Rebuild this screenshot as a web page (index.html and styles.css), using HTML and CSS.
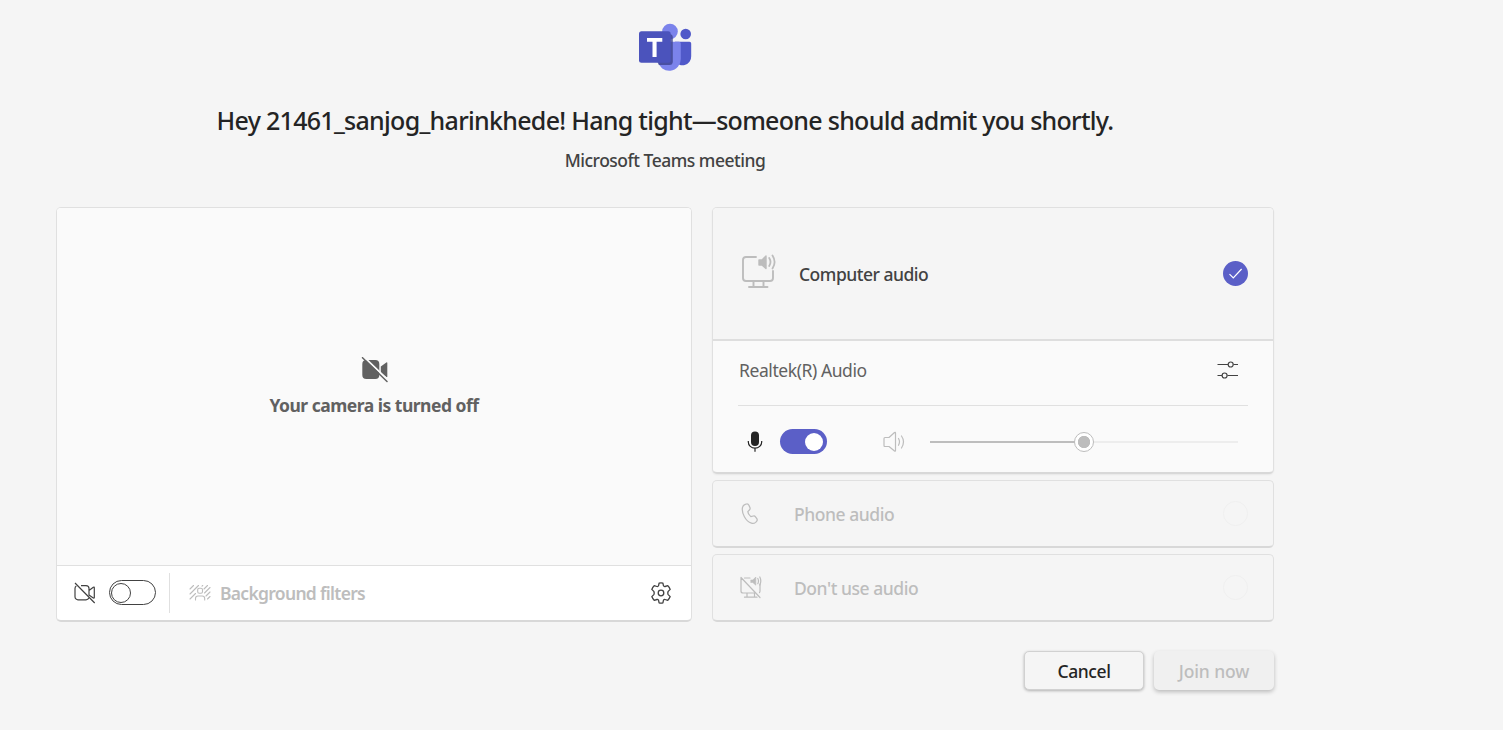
FILE: index.html
```html
<!DOCTYPE html>
<html lang="en">
<head>
<meta charset="utf-8">
<title>Microsoft Teams meeting</title>
<link rel="stylesheet" href="styles.css">
</head>
<body>
<main class="lobby">
  <header class="intro">
    <svg class="logo" width="54" height="48" viewBox="0 0 54 48">
      <circle cx="47.700" cy="11" r="5.300" fill="#5059c9"/>
      <path d="M37 18.800h14.500q1.700 0 1.700 1.800v12.700a8.500 8.500 0 0 1-16.200 4z" fill="#5059c9"/>
      <circle cx="32" cy="8.500" r="7.800" fill="#7b83eb"/>
      <path d="M20 18.800h21q1.800 0 1.800 1.800v15a11.600 11.800 0 0 1-23 2.500z" fill="#7b83eb"/>
      <path d="M20 11h11.500q3.300 0 3.300 3.500V38.500q0 3.500-3.300 3.500H20.800l-1.300-3z" fill="#3d4390" opacity=".8"/>
      <rect x="1" y="8.200" width="31.700" height="31.600" rx="2.500" fill="#4b53bc"/>
      <path d="M9 15h15.300v3.700h-5.700V34h-4.100V18.700H9z" fill="#fff"/>
    </svg>
    <h1 class="title">Hey 21461_sanjog_harinkhede! Hang tight—someone should admit you shortly.</h1>
    <p class="meeting">Microsoft Teams meeting</p>
  </header>

  <div class="panels">
    <section class="card video">
      <div class="preview">
        <svg width="27" height="26" viewBox="0 0 27 26">
          <rect x="1.300" y="3" width="17" height="19" rx="4" fill="#616161"/>
          <path d="M19.800 9.500 25.300 5.500q1-.5 1 .5v13.500q0 1-1 .5l-5.500-4z" fill="#616161"/>
          <path d="M2.500-.5 28 24" stroke="#fafafa" stroke-width="1.800"/>
          <path d="M1.500.7 26 24.500" stroke="#616161" stroke-width="1.500" stroke-linecap="round"/>
        </svg>
        <p class="off-note">Your camera is turned off</p>
      </div>
      <div class="video-bar">
        <svg class="cam" width="22" height="22" viewBox="0 0 22 22" fill="none" stroke="#424242" stroke-width="1.200">
          <path d="M7 3.600h5a3 3 0 0 1 3 3v7M15 16q-1 1.800-3 1.800H4a3 3 0 0 1-3-3V6.600q0-1.700 1.300-2.500M15 8.500l4.300-3.300q1-.5 1 .6v9.600q0 1-1 .6L15 13M1 1l19.700 20"/>
        </svg>
        <span class="switch switch-off"></span>
        <span class="bar-rule"></span>
        <svg class="bg-icon" width="22" height="18" viewBox="0 0 22 18" fill="none" stroke="#bdbdbd" stroke-width="1.100" stroke-linecap="round">
          <path d="M1 5l3.500-3.500M1 10l8.500-8.500M1 15l5.500-5.500M13 2.200l.7-.7M15 5l3.500-3.500M15.500 9l5.500-5.500M17 12l4-4M18.500 15l2.500-2.500"/>
          <rect x="8.700" y="4.300" width="4.800" height="5" rx="1.500"/>
          <path d="M6.500 16v-1.500q0-2.500 2.500-2.500h4.200q2.500 0 2.500 2.500V16"/>
        </svg>
        <span class="filters">Background filters</span>
        <svg class="gear" width="22" height="22" viewBox="0 0 22 22" fill="none" stroke="#424242" stroke-width="1.300" stroke-linejoin="round">
          <path d="M9.100 1.200Q11 .6 12.900 1.200l.6 2.600q.5 1 1.600.7l2.700-.8q1.600 1.600 2.400 3.700l-2 2q-.8 1.600 0 3.200l2 2q-.8 2.100-2.400 3.700l-2.700-.8q-1.100-.3-1.600.7l-.6 2.600q-1.900.6-3.800 0l-.6-2.600q-.5-1-1.600-.7l-2.700.8q-1.600-1.600-2.400-3.700l2-2q.8-1.600 0-3.200l-2-2q.8-2.100 2.400-3.700l2.700.8q1.100.3 1.600-.7z"/>
          <circle cx="11" cy="11" r="2.800"/>
        </svg>
      </div>
    </section>

    <section class="audio">
      <div class="card computer">
        <div class="computer-head">
          <svg class="screen" width="36" height="36" viewBox="0 0 36 36" fill="none" stroke="#bdbdbd" stroke-width="1.900" stroke-linecap="round">
            <path d="M15 3H5Q2 3 2 6v18q0 3 3 3h24q3 0 3-3v-7M12.500 27v5.500M22.500 27v5.500M8 33h18.500"/>
            <path d="M18 6h3l4-4v12.500L21 11h-3z" fill="#bdbdbd" stroke-width="1.400" stroke-linejoin="round"/>
            <path d="M28.200 4q2.600 4 0 8M31.500 1.500q4.200 6.500 0 13" stroke-width="1.800"/>
          </svg>
          <span class="name name-main">Computer audio</span>
          <svg class="check" width="25" height="25" viewBox="0 0 25 25">
            <circle cx="12.500" cy="12.500" r="12.500" fill="#5b5fc7"/>
            <path d="M6.500 13.200 10.300 17 18.600 8" fill="none" stroke="#fff" stroke-width="1.200"/>
          </svg>
        </div>
        <div class="device">
          <div class="device-row">
            <span class="device-name">Realtek(R) Audio</span>
            <svg class="tune" width="22" height="20" viewBox="0 0 22 20" fill="none" stroke="#424242" stroke-width="1.200">
              <path d="M.5 4.500H11M16.500 4.500h4.500M.5 15.500H5M10.500 15.500H21"/>
              <circle cx="13.700" cy="4.500" r="2.500"/><circle cx="7.600" cy="15.500" r="2.500"/>
            </svg>
          </div>
          <div class="levels">
            <svg class="mic" width="16" height="21" viewBox="0 0 16 21">
              <rect x="4" y="0.500" width="8" height="14.500" rx="4" fill="#242424"/>
              <path d="M1.300 10v1a6.700 6.200 0 0 0 13.400 0v-1M8 17.300v3.500" fill="none" stroke="#242424" stroke-width="1.200"/>
            </svg>
            <span class="switch switch-on"></span>
            <svg class="speaker" width="22" height="22" viewBox="0 0 22 22" fill="none" stroke="#bdbdbd" stroke-width="1.200" stroke-linejoin="round" stroke-linecap="round">
              <path d="M1 7.500q0-1 1-1h4L11.500 1.500q1-.7 1 .4v17.700q0 1-1 .4L6 15.500H2q-1 0-1-1zM15.500 7.500q2 3.300 0 6.800M18.500 5q4 5.700 0 12"/>
            </svg>
            <span class="slider"><span class="knob"></span></span>
          </div>
        </div>
      </div>

      <div class="card option">
        <svg width="22" height="22" viewBox="0 0 22 22" fill="none" stroke="#bdbdbd" stroke-width="1.250" stroke-linejoin="round">
          <path d="M5.200 1.400 6.500 1q1.700-.3 2.400 1.200l1 2.300q.6 1.400-.5 2.500L7.800 8.600q.2 2.500 3 5l2.600-.6q1.300-.3 2.100.8l1.300 1.900q1 1.500-.4 2.900l-.8.800q-1.700 1.500-4.200.8-4.300-1.300-7-6.400-2.800-5.300-1.900-9.400.5-2.300 2.700-3z"/>
        </svg>
        <span class="name">Phone audio</span>
        <span class="radio"></span>
      </div>

      <div class="card option">
        <svg width="22" height="23" viewBox="0 0 22 23" fill="none" stroke="#bdbdbd" stroke-width="1.200" stroke-linecap="round">
          <path d="M4.500 2H10M1 2v13q0 2 2 2h12.500M20 8v7q0 1-.5 1.500M7 17v4M14.500 17v4M4.500 21.200H17M1 1.500 20 21.500"/>
          <path d="M11 4h1.800l3-3v8.200l-3-2.700H11z" fill="#bdbdbd" stroke-width=".6"/>
          <path d="M17.800 2.500q1.400 2.500 0 5.200M19.800 1q2 4 0 8"/>
        </svg>
        <span class="name name-none">Don't use audio</span>
        <span class="radio"></span>
      </div>
    </section>
  </div>

  <footer class="actions">
    <button class="btn btn-cancel"><span>Cancel</span></button>
    <button class="btn btn-join" disabled><span>Join now</span></button>
  </footer>
</main>
</body>
</html>
```
FILE: styles.css
```css
* { box-sizing: border-box; }

body {
  margin: 0;
  min-height: 730px;
  background: #f5f5f5;
  color: #242424;
  font-family: "Noto Sans", "Open Sans", sans-serif;
  overflow: hidden;
}

h1, p { margin: 0; white-space: nowrap; }
svg { display: block; flex: none; }

.lobby { width: 1218px; margin-left: 56px; padding-top: 23px; }

.intro { display: flex; flex-direction: column; align-items: center; height: 184px; }
.title { margin-top: 31px; font-size: 25px; line-height: 36px; font-weight: 500; letter-spacing: -0.71px; }
.meeting { margin-top: 9px; font-size: 17.500px; line-height: 26px; font-weight: 500; color: #424242; letter-spacing: -0.5px; }

.panels { display: flex; gap: 20px; height: 415px; }

.card {
  border: 1px solid #e0e0e0;
  border-bottom: 2px solid #d8d8d8;
  border-radius: 5px;
}

.video { display: flex; flex-direction: column; width: 636px; background: #fff; overflow: hidden; }
.preview {
  display: flex; flex-direction: column; align-items: center;
  height: 358px; padding-top: 149px;
  background: #fafafa; border-bottom: 1px solid #e0e0e0;
}
.off-note { margin-top: 9px; font-size: 17.500px; line-height: 26px; font-weight: 700; color: #616161; letter-spacing: -0.5px; }

.video-bar { display: flex; align-items: center; height: 53px; padding: 0 19px 0 17px; }
.switch { display: flex; align-items: center; width: 47px; height: 25px; border-radius: 13px; flex: none; }
.switch::before { content: ""; width: 18px; height: 18px; border-radius: 50%; }
.switch-off { margin-left: 13px; border: 1px solid #424242; padding-left: 1px; }
.switch-off::before { border: 1px solid #424242; }
.switch-on { margin-left: 17px; background: #5b5fc7; padding-left: 25px; }
.switch-on::before { background: #fff; }
.bar-rule { width: 1px; height: 40px; margin-left: 13px; background: #e0e0e0; }
.bg-icon { margin-left: 19px; }
.filters { margin-left: 9px; font-size: 17.500px; line-height: 26px; font-weight: 600; color: #bdbdbd; white-space: nowrap; letter-spacing: -0.7px; }
.gear { margin-left: auto; }

.audio { display: flex; flex-direction: column; width: 562px; gap: 6px; }
.computer { height: 267px; background: #fafafa; overflow: hidden; box-shadow: 0 1px 2px rgba(0, 0, 0, .06); }
.computer-head {
  display: flex; align-items: center; height: 133px; padding: 0 25px 0 28px;
  background: #f5f5f5; border-bottom: 2px solid #dedede;
}
.screen { margin-bottom: 3px; }
.name { font-size: 17.500px; line-height: 26px; font-weight: 500; white-space: nowrap; letter-spacing: -0.5px; }
.name-main { margin-left: 22px; color: #424242; }
.check { margin-left: auto; }

.device { padding: 0 25px; }
.device-row { display: flex; align-items: center; height: 65px; padding: 0 9px 6px 1px; border-bottom: 1px solid #e0e0e0; }
.device-name { font-size: 17.500px; line-height: 26px; color: #616161; letter-spacing: -0.42px; }
.tune { margin: 0 0 1px auto; }
.levels { display: flex; align-items: center; height: 71px; padding-left: 9px; }
.speaker { margin-left: 56px; }
.slider {
  display: flex; align-items: center; justify-content: center;
  width: 308px; height: 2px; margin-left: 25px;
  background: linear-gradient(90deg, #bdbdbd 50%, #ededed 50%);
}
.knob {
  flex: none; width: 20px; height: 20px; border: 1px solid #bdbdbd; border-radius: 50%;
  background: radial-gradient(circle, #bdbdbd 5.800px, #fff 6.500px);
}

.option { display: flex; align-items: center; height: 68px; padding: 0 25px 0 27px; color: #bdbdbd; }
.option .name { margin-left: 32px; letter-spacing: -0.45px; }
.radio { width: 25px; height: 25px; margin-left: auto; border: 1px solid #f0f0f0; border-radius: 50%; }

.actions { display: flex; justify-content: flex-end; gap: 10px; margin-top: 29px; }
.btn {
  display: flex; align-items: center; justify-content: center;
  width: 120px; height: 39px; padding: 1px 0 0; border: 0; border-radius: 5px;
  font: 500 17.500px/26px "Noto Sans", sans-serif; letter-spacing: -0.4px;
}
.btn-cancel { background: #f5f5f5; color: #242424; border: 1px solid #d1d1d1; box-shadow: 0 1px 3px rgba(0, 0, 0, .28); }
.btn-join { background: #f0f0f0; color: #bdbdbd; letter-spacing: -0.1px; box-shadow: 0 2px 4px rgba(0, 0, 0, .24); }
```
